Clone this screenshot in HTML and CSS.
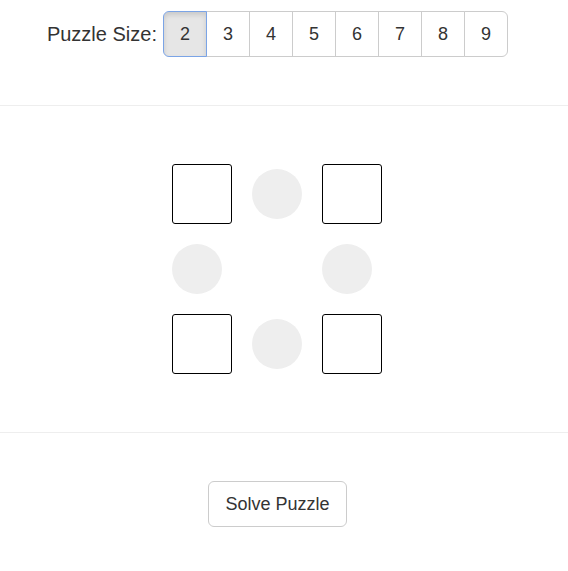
FILE: index.html
```html
<!DOCTYPE html>
<html>
<head>
<meta charset="utf-8">
<link rel="stylesheet" href="styles.css">
</head>
<body>
<div class="toolbar">
  <label class="size-label">Puzzle Size:</label>
  <div class="btn-group">
    <button class="btn active">2</button>
    <button class="btn">3</button>
    <button class="btn">4</button>
    <button class="btn">5</button>
    <button class="btn">6</button>
    <button class="btn">7</button>
    <button class="btn">8</button>
    <button class="btn">9</button>
  </div>
</div>
<hr class="divider">
<div class="board-wrap">
  <div class="board">
    <div class="cell"><div class="box"></div></div>
    <div class="cell"><div class="dot"></div></div>
    <div class="cell"><div class="box"></div></div>
    <div class="cell"><div class="dot"></div></div>
    <div class="cell"></div>
    <div class="cell"><div class="dot"></div></div>
    <div class="cell"><div class="box"></div></div>
    <div class="cell"><div class="dot"></div></div>
    <div class="cell"><div class="box"></div></div>
  </div>
</div>
<hr class="divider">
<div class="actions">
  <button class="btn solve">Solve Puzzle</button>
</div>
</body>
</html>
```
FILE: styles.css
```css
html, body {
  margin: 0;
  padding: 0;
  background: #fff;
  font-family: "Liberation Sans", Arial, sans-serif;
  color: #333;
}

.toolbar {
  display: flex;
  justify-content: center;
  align-items: center;
  gap: 6px;
  padding: 11px 13px 48px 0;
}

.size-label {
  font-size: 20px;
  line-height: 24px;
  color: #333;
}

.btn-group {
  display: flex;
}

.btn {
  font-family: "Liberation Sans", Arial, sans-serif;
  font-size: 18px;
  line-height: 24px;
  padding: 10px 16px;
  color: #333;
  background: #fff;
  border: 1px solid #ccc;
  border-radius: 0;
  margin: 0;
  cursor: pointer;
}

.btn-group .btn + .btn {
  margin-left: -1px;
}

.btn-group .btn:first-child {
  border-radius: 6px 0 0 6px;
}

.btn-group .btn:last-child {
  border-radius: 0 6px 6px 0;
}

.btn.active {
  position: relative;
  background: #e6e6e6;
  border-color: #7ba4e6;
  box-shadow: inset 0 3px 5px rgba(0, 0, 0, 0.125);
}

.divider {
  margin: 0;
  border: 0;
  border-top: 1px solid #eee;
}

.board-wrap {
  display: flex;
  justify-content: center;
  padding: 58px 15px 58px 0;
}

.board {
  display: grid;
  grid-template-columns: 60px 50px 60px;
  grid-template-rows: 60px 50px 60px;
  gap: 20px;
}

.cell {
  display: flex;
  align-items: center;
  justify-content: flex-start;
}

.box {
  width: 60px;
  height: 60px;
  box-sizing: border-box;
  border: 1px solid #000;
  border-radius: 3px;
}

.dot {
  width: 50px;
  height: 50px;
  border-radius: 50%;
  background: #eee;
}

.actions {
  display: flex;
  justify-content: center;
  padding: 48px 13px 0 0;
}

.btn.solve {
  border-radius: 6px;
}
```
